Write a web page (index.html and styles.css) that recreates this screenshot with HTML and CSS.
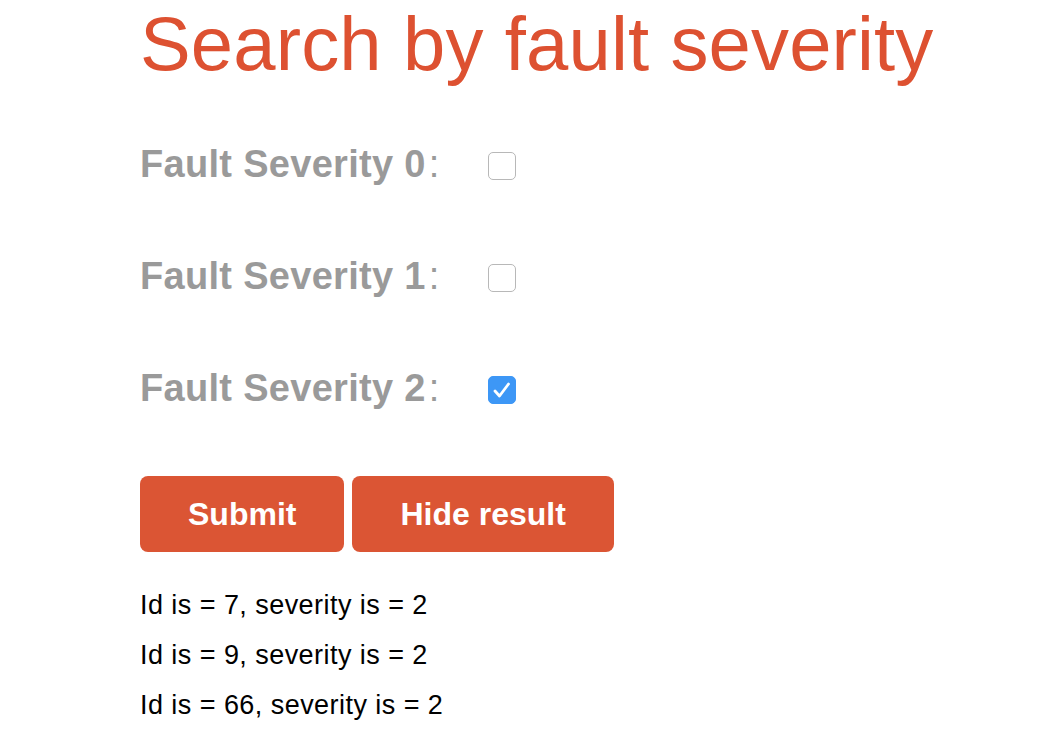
FILE: index.html
```html
<!DOCTYPE html>
<html>
<head>
<meta charset="utf-8">
<link rel="stylesheet" href="styles.css">
</head>
<body>
<div class="page">
  <h1 class="title">Search by fault severity</h1>
  <form class="form">
    <div class="row">
      <span class="label">Fault Severity 0<span class="colon">:</span></span>
      <span class="box"></span>
    </div>
    <div class="row">
      <span class="label">Fault Severity 1<span class="colon">:</span></span>
      <span class="box"></span>
    </div>
    <div class="row">
      <span class="label">Fault Severity 2<span class="colon">:</span></span>
      <span class="box checked"><svg viewBox="0 0 28 28" width="28" height="28"><path d="M7 15 L11.5 20 L20.5 8" fill="none" stroke="#fff" stroke-width="2.8" stroke-linecap="round" stroke-linejoin="round"/></svg></span>
    </div>
    <div class="actions">
      <button type="button" class="btn">Submit</button>
      <button type="button" class="btn">Hide result</button>
    </div>
  </form>
  <div class="results">
    <p class="result">Id is = 7, severity is = 2</p>
    <p class="result">Id is = 9, severity is = 2</p>
    <p class="result">Id is = 66, severity is = 2</p>
  </div>
</div>
</body>
</html>
```
FILE: styles.css
```css
html, body {
  margin: 0;
  padding: 0;
  background: #fff;
}
.page {
  padding-left: 140px;
  font-family: "Liberation Sans", Arial, sans-serif;
}
.title {
  margin: 0;
  font-size: 76px;
  font-weight: normal;
  color: #dd5131;
  line-height: 87px;
  letter-spacing: 0.15px;
}
.form {
  margin: 21px 0 0 0;
}
.row {
  display: flex;
  align-items: center;
  height: 112px;
}
.label {
  width: 348px;
  font-size: 38px;
  font-weight: bold;
  color: #9a9a9a;
  letter-spacing: 0.3px;
}
.colon {
  font-weight: normal;
  margin-left: 3px;
}
.box {
  width: 26px;
  height: 26px;
  border: 1px solid #b8b8b8;
  border-radius: 5px;
  background: #fff;
  margin-top: 4px;
  display: flex;
}
.box.checked {
  background: #3d97f6;
  border-color: #3d97f6;
}
.box svg {
  margin: -1px;
}
.actions {
  display: flex;
  gap: 8px;
  margin-top: 32px;
}
.btn {
  height: 76px;
  padding: 0 48px;
  border: none;
  border-radius: 8px;
  background: #db5534;
  color: #fff;
  font-family: "Liberation Sans", Arial, sans-serif;
  font-size: 32px;
  font-weight: bold;
}
.results {
  margin-top: 28px;
}
.result {
  margin: 0;
  font-size: 27px;
  line-height: 50px;
  color: #000;
  letter-spacing: 0.45px;
}
```
